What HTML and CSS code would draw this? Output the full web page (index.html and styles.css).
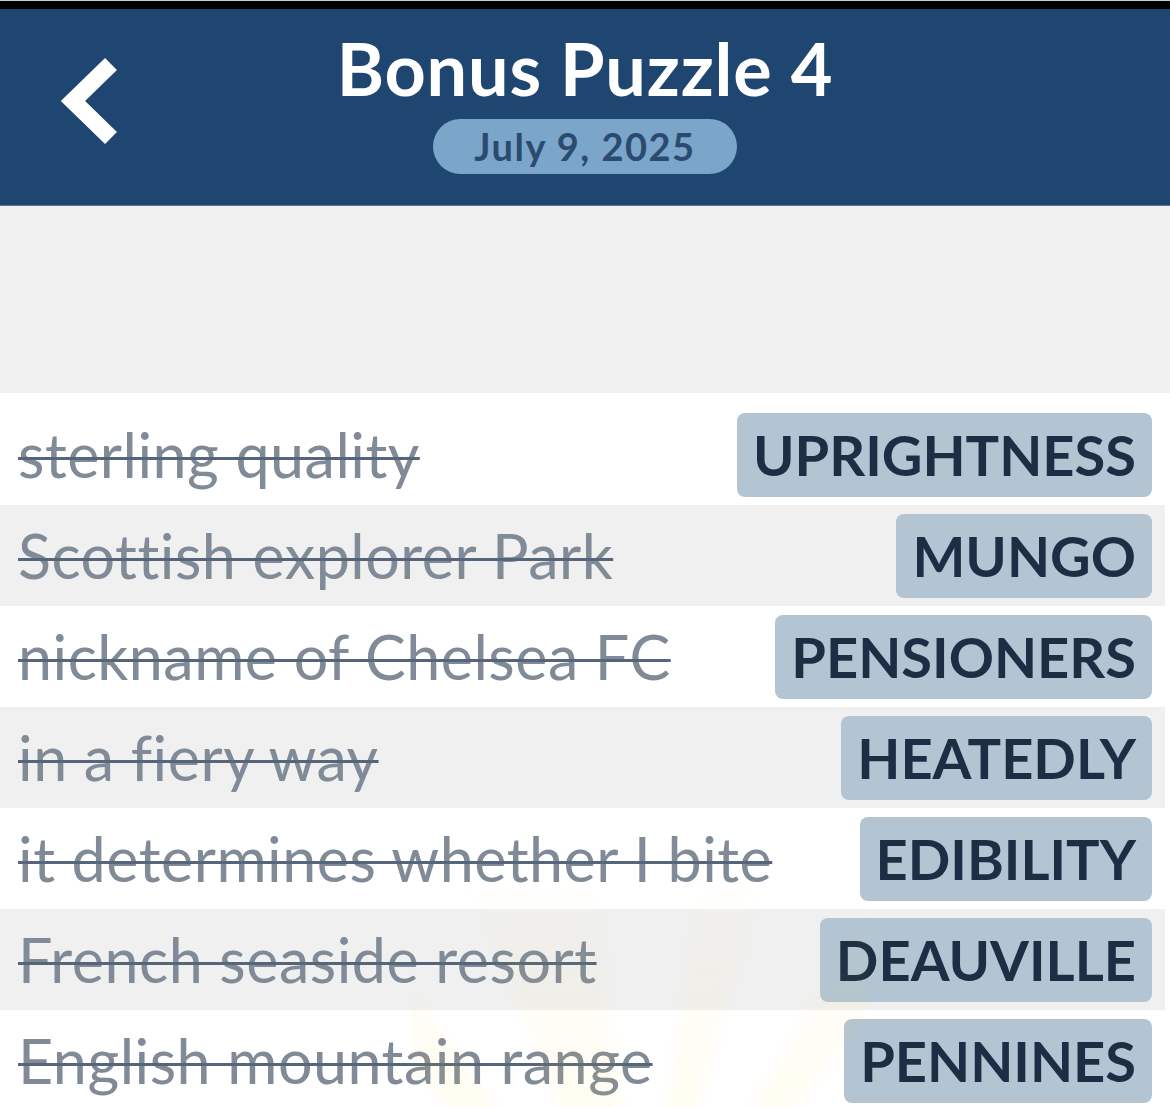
FILE: index.html
```html
<!DOCTYPE html>
<html lang="en">

<head>
    <meta charset="UTF-8">
    <meta name="viewport" content="width=device-width, initial-scale=1.0">
    <title>Bonus Puzzle 4</title>
    <link rel="stylesheet" href="styles.css">
</head>

<body>
    <div class="topbar"></div>

    <header class="header">
        <div class="back">
            <svg width="80" height="100" viewBox="0 0 80 100">
                <path d="M61 13 L23 50 L61 87" fill="none" stroke="#fff" stroke-width="17" stroke-linejoin="miter" />
            </svg>
        </div>
        <div class="heading">
            <h1>Bonus Puzzle 4</h1>
            <div class="date">July 9, 2025</div>
        </div>
        <div></div>
    </header>

    <div class="spacer"></div>

    <div class="clues">
        <div class="clue">
            <span class="clue-text">sterling quality</span>
            <span class="answer">UPRIGHTNESS</span>
        </div>
        <div class="clue">
            <span class="clue-text">Scottish explorer Park</span>
            <span class="answer">MUNGO</span>
        </div>
        <div class="clue">
            <span class="clue-text">nickname of Chelsea FC</span>
            <span class="answer">PENSIONERS</span>
        </div>
        <div class="clue">
            <span class="clue-text">in a fiery way</span>
            <span class="answer">HEATEDLY</span>
        </div>
        <div class="clue">
            <span class="clue-text">it determines whether I bite</span>
            <span class="answer">EDIBILITY</span>
        </div>
        <div class="clue">
            <span class="clue-text">French seaside resort</span>
            <span class="answer">DEAUVILLE</span>
        </div>
        <div class="clue">
            <span class="clue-text">English mountain range</span>
            <span class="answer">PENNINES</span>
        </div>

        <!-- faint sunburst showing through the list -->
        <div class="rays"></div>
    </div>
</body>

</html>
```

FILE: styles.css
```css
body {
    font-family: 'Lato', 'Open Sans', sans-serif;
    background-color: #ffffff;
    margin: 0;
    padding: 0;
    overflow: hidden;
    height: 1107px;
}

.topbar {
    height: 8px;
    background-color: #000;
    border-top: 1px solid #c8ccd2;
}

.header {
    display: grid;
    grid-template-columns: 1fr auto 1fr;
    height: 197px;
    background-color: #1e4670;
    border-bottom: 1px solid #5b7696;
    box-sizing: border-box;
}

.back {
    padding: 42px 0 0 50px;
}

.heading {
    display: flex;
    flex-direction: column;
    align-items: center;
}

h1 {
    margin: 19px 0 0;
    color: #fff;
    font-size: 72px;
    line-height: 80px;
    font-weight: 700;
    letter-spacing: 0.8px;
}

.date {
    margin-top: 11px;
    width: 304px;
    height: 55px;
    line-height: 55px;
    text-align: center;
    background-color: #7ba5c9;
    border-radius: 28px;
    color: #2b4a70;
    font-size: 38px;
    font-weight: 700;
    letter-spacing: 1.5px;
}

.spacer {
    height: 187px;
    background-color: #f0f0f0;
}

.clues {
    position: relative;
    padding-top: 11px;
    width: 1165px;
    height: 703px;
    overflow: hidden;
}

.clue {
    display: flex;
    justify-content: space-between;
    align-items: center;
    height: 101px;
    padding: 0 13px 0 18px;
}

.clue:nth-child(even) {
    background-color: #f0f0f0;
}

.clue-text {
    color: #808b97;
    font-size: 61px;
    letter-spacing: 0.5px;
    text-decoration: line-through;
    text-decoration-color: #56667a;
    text-decoration-thickness: 3px;
}

.answer {
    height: 84px;
    line-height: 84px;
    padding: 0 16px;
    background-color: #b3c5d3;
    border-radius: 8px;
    color: #1c2e44;
    font-size: 56px;
    font-weight: 700;
}

.rays {
    position: absolute;
    left: 410px;
    top: 480px;
    width: 460px;
    height: 240px;
    pointer-events: none;
    filter: blur(6px);
    background: repeating-conic-gradient(from -14deg at 50% 180%,
            rgba(255, 210, 70, 0.07) 0deg 8deg,
            rgba(255, 210, 70, 0) 8deg 22deg);
    -webkit-mask-image: linear-gradient(to bottom, transparent 0%, #000 85%);
    mask-image: linear-gradient(to bottom, transparent 0%, #000 85%);
}
```
